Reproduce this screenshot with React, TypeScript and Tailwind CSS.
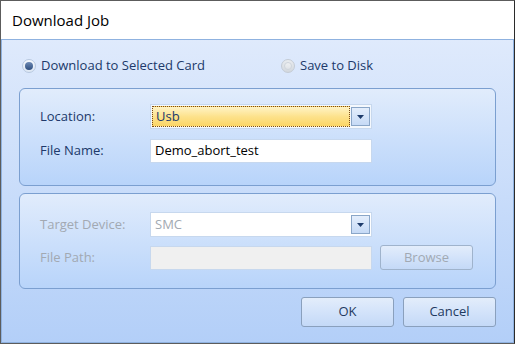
import React from "react";

const font = { fontFamily: '"Open Sans", "Noto Sans", Arial, sans-serif' };

function Radio({ checked, disabled }: { checked?: boolean; disabled?: boolean }) {
  return (
    <div
      className={`w-[14px] h-[14px] rounded-full border flex items-center justify-center ${
        disabled ? "border-[#c4cbd4] bg-gradient-to-b from-[#e9ecef] to-[#d3d8de]" : "border-[#b8c9e0] bg-gradient-to-b from-[#f4f8fd] to-[#dce6f3]"
      }`}
    >
      {checked ? (
        <div className="w-[8px] h-[8px] rounded-full bg-gradient-to-b from-[#6d8ab5] to-[#2f4f7f]" />
      ) : (
        <div className="w-[8px] h-[8px] rounded-full bg-gradient-to-b from-[#eef0f2] to-[#dfe3e7] border border-[#cfd5dc]" />
      )}
    </div>
  );
}

function DropBtn() {
  return (
    <div className="w-[19px] h-[19px] border border-[#8aa6c8] bg-gradient-to-b from-[#e4eefc] to-[#c6daf6] flex items-center justify-center">
      <svg width="7" height="4" viewBox="0 0 7 4">
        <path d="M0 0 H7 L3.5 4 Z" fill="#1e3b6b" />
      </svg>
    </div>
  );
}

function Button({ label, disabled, w }: { label: string; disabled?: boolean; w: string }) {
  return (
    <div
      className={`${w} flex items-center justify-center rounded-[3px] border ${
        disabled ? "border-[#9fb3cc] text-[#a1a9b3]" : "border-[#8aa0bd] text-[#1f3a60]"
      } bg-gradient-to-b from-[#e3edfb] via-[#d3e3fa] to-[#c4d9f7] text-[13px]`}
    >
      {label}
    </div>
  );
}

export default function App() {
  return (
    <div className="w-[515px] h-[344px] border border-[#5c5c5c] border-r-[#2b2b2b] flex flex-col bg-white" style={font}>
      <div className="h-[38px] bg-white flex items-center pl-[11px] text-[15px] text-black">Download Job</div>
      <div className="flex-1 border border-[#8fb2e0] bg-gradient-to-b from-[#dfeafc] to-[#b3cff8] px-[17px] pt-[14px] flex flex-col">
        <div className="flex items-center h-[24px] text-[13px] text-[#20396a]">
          <div className="flex items-center pl-[3px] w-[262px] gap-[5px]">
            <Radio checked />
            <span>Download to Selected Card</span>
          </div>
          <div className="flex items-center gap-[5px]">
            <Radio disabled />
            <span>Save to Disk</span>
          </div>
        </div>

        <div className="mt-[10px] h-[98px] w-[477px] rounded-[6px] border border-[#7b9fd0] bg-gradient-to-b from-[#e1ecfc] to-[#b8d4fa] pl-[20px] pt-[15px] flex flex-col gap-[10px] text-[13px] text-[#20396a]">
          <div className="flex items-center h-[25px]">
            <span className="w-[110px]">Location:</span>
            <div className="w-[222px] h-[25px] border border-[#c7d8ee] bg-[#f4f8fd] flex items-center p-[1px] gap-[1px]">
              <div className="flex-1 h-full border border-dotted border-[#7a4b1b] bg-gradient-to-b from-[#fff3c4] via-[#fde28c] to-[#fbd564] flex items-center pl-[3px] text-[#20396a]">
                Usb
              </div>
              <DropBtn />
            </div>
          </div>
          <div className="flex items-center h-[24px]">
            <span className="w-[110px]">File Name:</span>
            <div className="w-[222px] h-[24px] border border-[#c7d8ee] bg-white flex items-center pl-[4px] text-black">
              Demo_abort_test
            </div>
          </div>
        </div>

        <div className="mt-[7px] h-[96px] w-[477px] rounded-[6px] border border-[#7b9fd0] bg-gradient-to-b from-[#e1ecfc] to-[#b8d4fa] pl-[20px] pt-[18px] flex flex-col gap-[8px] text-[13px] text-[#a2a9b2]">
          <div className="flex items-center h-[25px]">
            <span className="w-[110px]">Target Device:</span>
            <div className="w-[222px] h-[25px] border border-[#c7d8ee] bg-white flex items-center p-[1px]">
              <div className="flex-1 pl-[3px]">SMC</div>
              <DropBtn />
            </div>
          </div>
          <div className="flex items-center h-[25px]">
            <span className="w-[110px]">File Path:</span>
            <div className="w-[222px] h-[24px] border border-[#c7d8ee] bg-[#f0f0f0]" />
            <div className="ml-[8px] h-[25px] flex">
              <Button label="Browse" disabled w="w-[93px]" />
            </div>
          </div>
        </div>

        <div className="mt-[8px] flex justify-end gap-[9px] w-[477px]">
          <div className="h-[30px] flex"><Button label="OK" w="w-[93px]" /></div>
          <div className="h-[30px] flex"><Button label="Cancel" w="w-[93px]" /></div>
        </div>
      </div>
    </div>
  );
}
